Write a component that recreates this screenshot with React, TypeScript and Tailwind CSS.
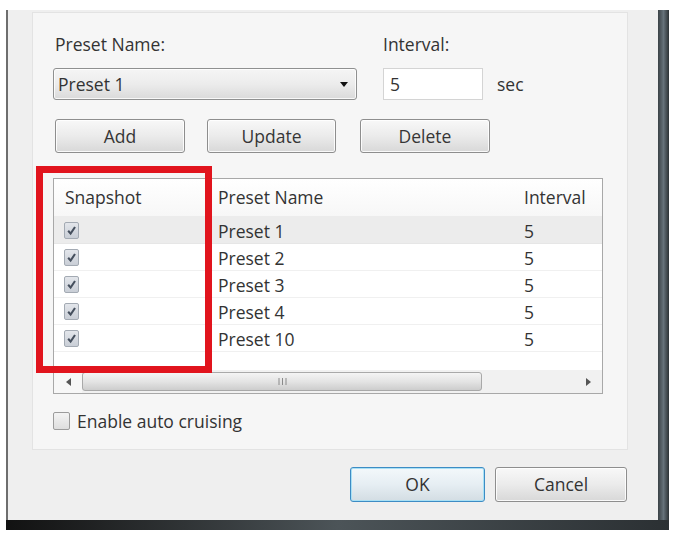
import React from "react";

function TickBox() {
  return (
    <span className="inline-flex h-[17px] w-[15px] items-center justify-center rounded-[2px] border border-[#a3aab3] bg-gradient-to-b from-[#e3e6eb] to-[#c9ced6]">
      <svg width="11" height="11" viewBox="0 0 10 10">
        <path d="M2 5.2 L4.2 7.8 L8.2 1.8" stroke="#46505e" strokeWidth="1.9" fill="none" />
      </svg>
    </span>
  );
}

function Btn({ w, children }: { w: string; children: React.ReactNode }) {
  return (
    <div
      className={`flex h-[34px] items-center justify-center rounded-[3px] border border-[#8e8e8e] bg-gradient-to-b from-[#f8f8f8] via-[#ebebeb] to-[#d8d8d8] text-[17.5px] text-[#363636] shadow-[inset_0_0_0_1px_rgba(255,255,255,0.85)] ${w}`}
    >
      {children}
    </div>
  );
}

const rows = ["Preset 1", "Preset 2", "Preset 3", "Preset 4", "Preset 10"];

export default function App() {
  return (
    <div className="relative h-[534px] w-[673px] overflow-hidden bg-white font-['Open_Sans',sans-serif] text-[17.5px] leading-[23px] text-[#333]">
      <div className="ml-[6px] mt-[10px] flex h-[520px] w-[663px] flex-col">
        <div className="flex h-[510px]">
          <div className="w-[2px] bg-[#6e6e6e]" />
          <div className="flex w-[650px] flex-col bg-[#efefef]">
            {/* panel */}
            <div className="ml-[24px] mt-[2px] flex h-[438px] w-[596px] flex-col border border-[#e3e3e3] bg-[#f6f6f6]">
              {/* labels */}
              <div className="mt-[20px] flex h-[23px]">
                <span className="ml-[22px] w-[328px]">Preset Name:</span>
                <span>Interval:</span>
              </div>
              {/* dropdown row */}
              <div className="mt-[12px] flex h-[32px] items-center">
                <div className="ml-[20px] flex h-[32px] w-[304px] items-center justify-between rounded-[3px] border border-[#8f9090] bg-gradient-to-b from-[#f5f5f5] via-[#ececec] to-[#dadada] pl-[4px] pr-[8px] shadow-[inset_0_0_0_1px_rgba(255,255,255,0.8)]">
                  <span>Preset 1</span>
                  <svg width="8" height="5" viewBox="0 0 8 5">
                    <path d="M0 0 H8 L4 5 Z" fill="#111" />
                  </svg>
                </div>
                <div className="ml-[26px] flex h-[32px] w-[100px] items-center border border-[#d4d4d4] bg-white pl-[6px]">
                  5
                </div>
                <span className="ml-[14px]">sec</span>
              </div>
              {/* buttons */}
              <div className="mt-[19px] flex h-[34px]">
                <div className="ml-[22px]">
                  <Btn w="w-[130px]">Add</Btn>
                </div>
                <div className="ml-[22px]">
                  <Btn w="w-[129px]">Update</Btn>
                </div>
                <div className="ml-[24px]">
                  <Btn w="w-[130px]">Delete</Btn>
                </div>
              </div>
              {/* table */}
              <div className="ml-[20px] mt-[25px] flex h-[216px] w-[550px] flex-col border border-[#a8a8a8] bg-white">
                <div className="flex h-[38px] border-b border-[#ececec] bg-gradient-to-b from-white to-[#f7f7f7] pt-[7px]">
                  <span className="w-[153px] pl-[11px]">Snapshot</span>
                  <span className="w-[306px] pl-[11px]">Preset Name</span>
                  <span className="pl-[11px]">Interval</span>
                </div>
                {rows.map((r, i) => (
                  <div
                    key={r}
                    className={`flex h-[27px] items-center border-b ${
                      i === 0 ? "border-[#e6e6e6] bg-[#ececec]" : "border-[#f0f0f0] bg-white"
                    }`}
                  >
                    <span className="flex w-[153px] items-center pl-[10px]">
                      <TickBox />
                    </span>
                    <span className="w-[306px] pl-[11px] pt-[2px]">{r}</span>
                    <span className="pl-[11px] pt-[2px]">5</span>
                  </div>
                ))}
                <div className="h-[18px]" />
                <div className="flex h-[23px] items-center bg-[#f1f1f1]">
                  <div className="flex h-[23px] w-[28px] items-center justify-center bg-[#f7f7f7]">
                    <svg width="5" height="8" viewBox="0 0 5 8">
                      <path d="M5 0 V8 L0 4 Z" fill="#555" />
                    </svg>
                  </div>
                  <div className="flex h-[19px] w-[400px] items-center justify-center rounded-[3px] border border-[#a9a9a9] bg-gradient-to-b from-[#f4f4f4] via-[#e4e4e4] to-[#cdcdcd]">
                    <svg width="9" height="7" viewBox="0 0 9 7">
                      <path d="M1 0 V7 M4.5 0 V7 M8 0 V7" stroke="#8a8a8a" strokeWidth="1" />
                    </svg>
                  </div>
                  <div className="flex-1" />
                  <div className="flex h-[23px] w-[28px] items-center justify-center">
                    <svg width="5" height="8" viewBox="0 0 5 8">
                      <path d="M0 0 V8 L5 4 Z" fill="#555" />
                    </svg>
                  </div>
                </div>
              </div>
              {/* auto cruising */}
              <div className="ml-[20px] mt-[17px] flex h-[20px] items-center">
                <span className="h-[18px] w-[17px] rounded-[2px] border border-[#9c9c9c] bg-gradient-to-b from-[#f4f4f4] to-[#dedede]" />
                <span className="ml-[7px]">Enable auto cruising</span>
              </div>
            </div>
            {/* footer */}
            <div className="mt-[17px] flex justify-end gap-[10px] pr-[31px]">
              <div className="flex h-[35px] w-[135px] items-center justify-center rounded-[3px] border border-[#3d8cc4] bg-gradient-to-b from-[#f3f8fb] via-[#e6eef3] to-[#d3dde3] shadow-[inset_0_0_0_1px_#a8e0f5]">
                OK
              </div>
              <div className="flex h-[35px] w-[132px] items-center justify-center rounded-[3px] border border-[#8e8e8e] bg-gradient-to-b from-[#f8f8f8] via-[#ebebeb] to-[#d8d8d8] shadow-[inset_0_0_0_1px_rgba(255,255,255,0.85)]">
                Cancel
              </div>
            </div>
          </div>
          <div className="w-[11px] bg-gradient-to-r from-[#3b4246] via-[#66727a] to-[#2d3336]" />
        </div>
        <div className="h-[10px] bg-gradient-to-r from-[#121212] via-[#4c5458] to-[#2b3033]" />
      </div>
      {/* red highlight */}
      <div className="absolute left-[36px] top-[166px] h-[207px] w-[176px] border-[7px] border-[#e1141d]" />
    </div>
  );
}
